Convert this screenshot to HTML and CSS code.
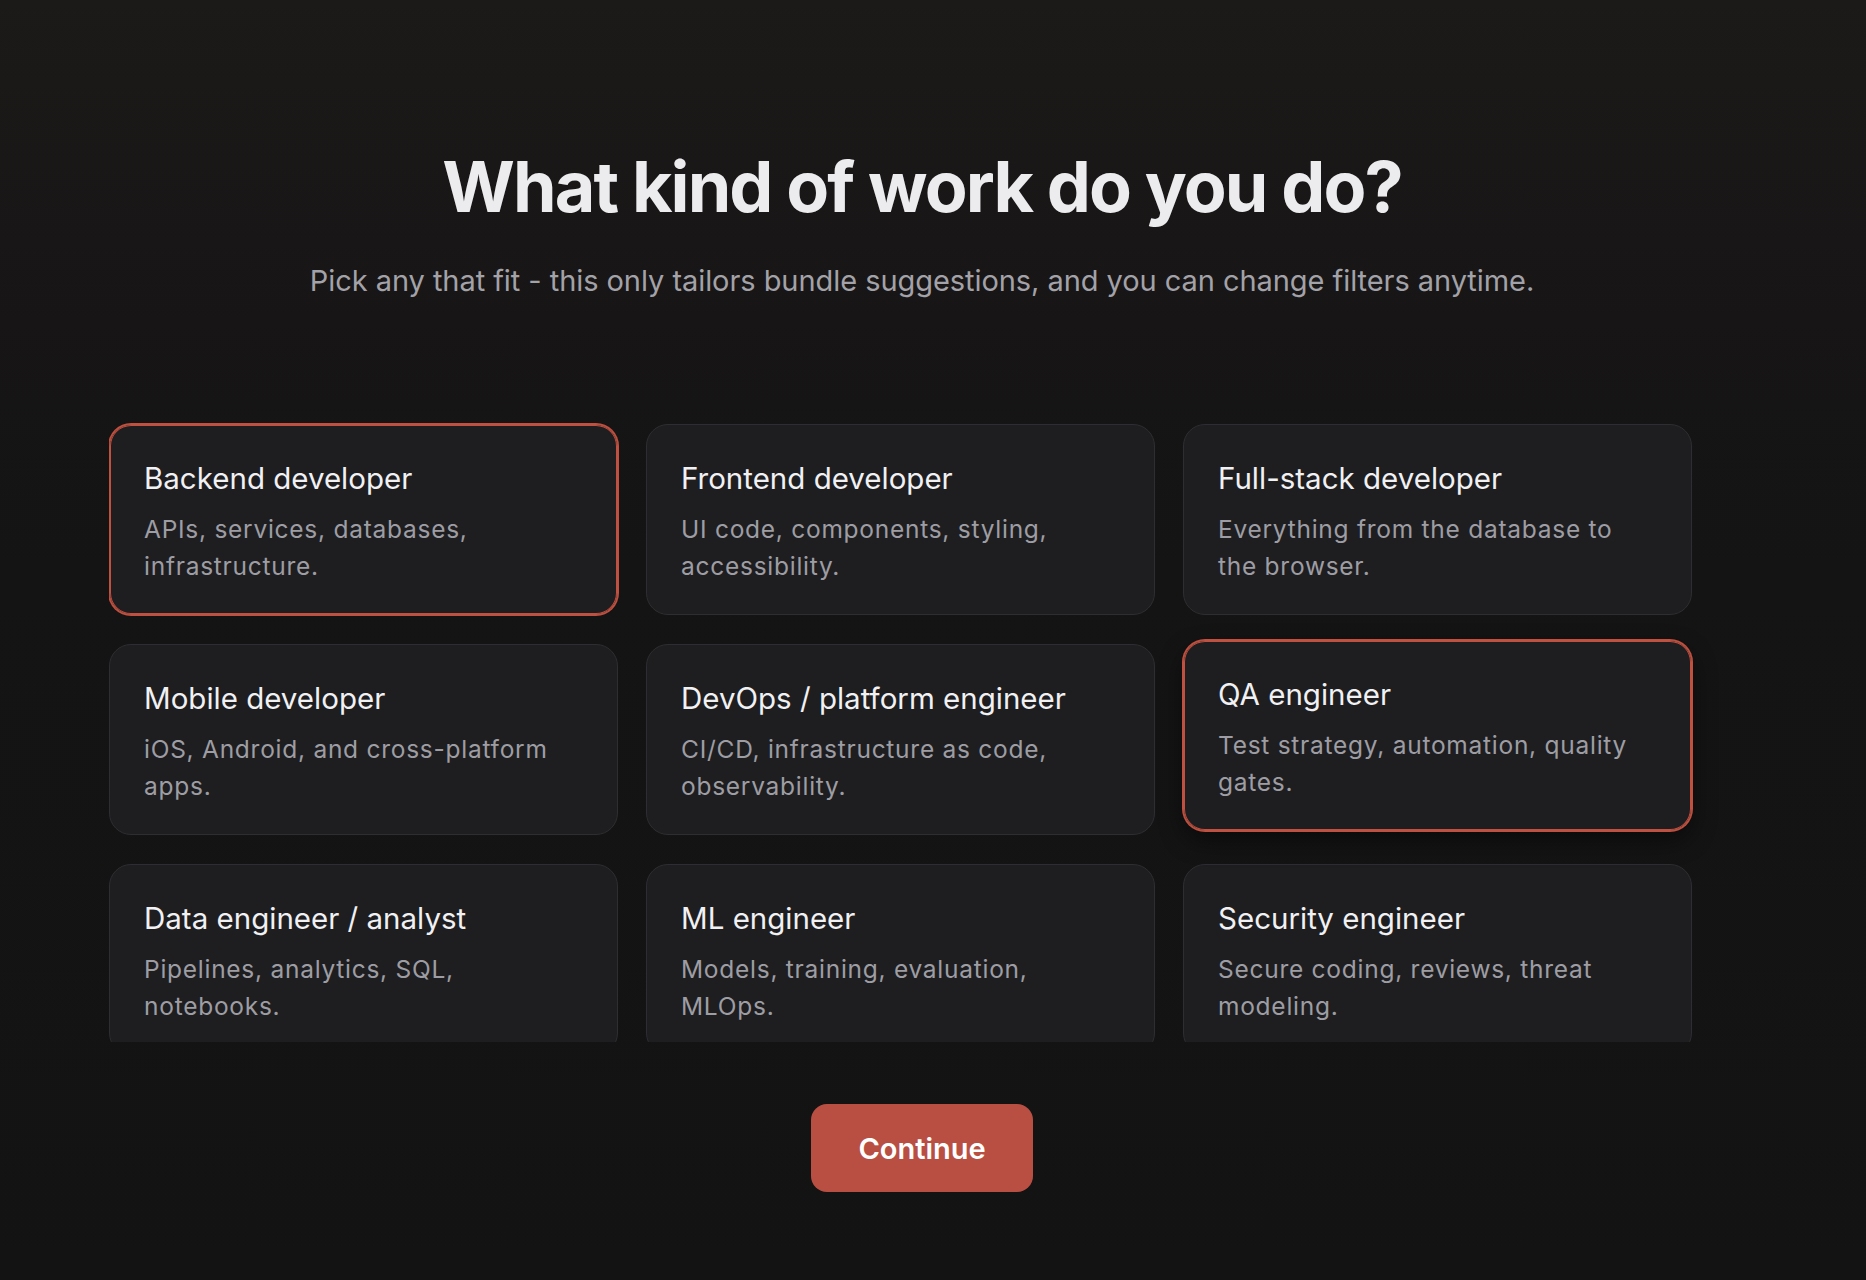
FILE: index.html
```html
<!DOCTYPE html>
<html lang="en">
<head>
<meta charset="utf-8">
<title>What kind of work do you do?</title>
<link rel="stylesheet" href="styles.css">
</head>
<body>
<main class="page">
  <h1 class="title">What kind of work do you do?</h1>
  <p class="subtitle">Pick any that fit - this only tailors bundle suggestions, and you can change filters anytime.</p>
  <div class="scroller">
    <div class="grid">
      <div class="card selected">
        <div class="card-title">Backend developer</div>
        <div class="card-desc">APIs, services, databases, infrastructure.</div>
      </div>
      <div class="card">
        <div class="card-title">Frontend developer</div>
        <div class="card-desc">UI code, components, styling, accessibility.</div>
      </div>
      <div class="card">
        <div class="card-title">Full-stack developer</div>
        <div class="card-desc">Everything from the database to the browser.</div>
      </div>
      <div class="card">
        <div class="card-title">Mobile developer</div>
        <div class="card-desc">iOS, Android, and cross-platform apps.</div>
      </div>
      <div class="card">
        <div class="card-title">DevOps / platform engineer</div>
        <div class="card-desc">CI/CD, infrastructure as code, observability.</div>
      </div>
      <div class="card selected hovered">
        <div class="card-title">QA engineer</div>
        <div class="card-desc">Test strategy, automation, quality gates.</div>
      </div>
      <div class="card">
        <div class="card-title">Data engineer / analyst</div>
        <div class="card-desc">Pipelines, analytics, SQL, notebooks.</div>
      </div>
      <div class="card">
        <div class="card-title">ML engineer</div>
        <div class="card-desc">Models, training, evaluation, MLOps.</div>
      </div>
      <div class="card">
        <div class="card-title">Security engineer</div>
        <div class="card-desc">Secure coding, reviews, threat modeling.</div>
      </div>
    </div>
  </div>
  <button class="continue" type="button">Continue</button>
</main>
</body>
</html>
```

FILE: styles.css
```css
html, body {
  margin: 0;
  padding: 0;
}

body {
  min-height: 100vh;
  background: linear-gradient(180deg, #1c1919 0%, #171515 25%, #141414 45%, #131313 100%);
  font-family: Inter, "Noto Sans", "Liberation Sans", sans-serif;
  color: #ededf0;
  overflow: hidden;
}

.page {
  width: calc(100% - 22px);
  display: flex;
  flex-direction: column;
  align-items: center;
  padding-top: 148px;
  box-sizing: border-box;
}

.title {
  margin: 0;
  font-size: 70px;
  line-height: 77px;
  font-weight: 700;
  letter-spacing: -0.027em;
  color: #ececef;
}

.subtitle {
  margin: 35px 0 0;
  font-size: 29px;
  line-height: 42px;
  font-weight: 400;
  color: #a2a2a8;
  letter-spacing: -0.002em;
}

.scroller {
  margin-top: 108px;
  width: 1626px;
  height: 632px;
  padding-top: 14px;
  box-sizing: border-box;
  overflow: hidden;
}

.grid {
  display: grid;
  grid-template-columns: repeat(3, 509px);
  column-gap: 28px;
  row-gap: 29px;
}

.card {
  background: #1e1e21;
  border: 1px solid #2e2e32;
  border-radius: 22px;
  padding: 34px 34px 30px;
  box-sizing: border-box;
  height: 191px;
}

.card.selected {
  border-color: #c0503f;
  box-shadow: 0 0 0 1px #c0503f, inset 0 0 0 1px #c0503f;
}

.card.hovered {
  transform: translateY(-4px);
  box-shadow: 0 0 0 1px #c0503f, inset 0 0 0 1px #c0503f, 0 10px 24px rgba(0, 0, 0, 0.45);
}

.card-title {
  font-size: 29.5px;
  line-height: 38px;
  font-weight: 400;
  color: #f1f1f3;
}

.card-desc {
  margin-top: 14px;
  font-size: 24.5px;
  line-height: 37px;
  color: #9d9da3;
  letter-spacing: 0.03em;
}

.continue {
  margin-top: 62px;
  width: 222px;
  height: 88px;
  border: none;
  border-radius: 16px;
  background: #b94f42;
  color: #ffffff;
  font-family: Inter, "Noto Sans", "Liberation Sans", sans-serif;
  font-size: 29px;
  font-weight: 600;
  cursor: pointer;
}
```
